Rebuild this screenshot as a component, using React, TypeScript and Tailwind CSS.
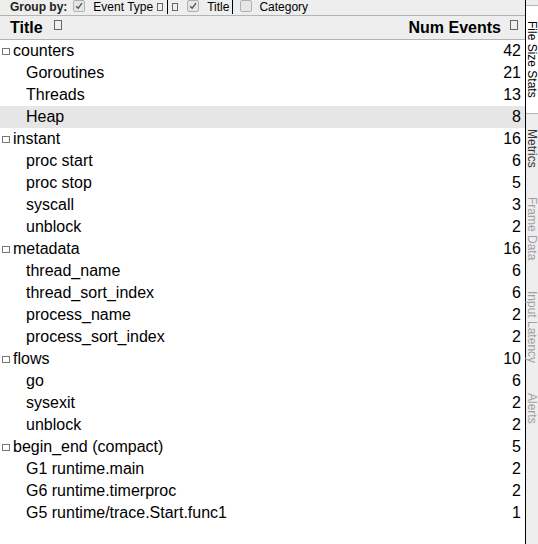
import React from "react";

type Row = { title: string; count: number; level: 0 | 1; selected?: boolean };

const rows: Row[] = [
  { title: "counters", count: 42, level: 0 },
  { title: "Goroutines", count: 21, level: 1 },
  { title: "Threads", count: 13, level: 1 },
  { title: "Heap", count: 8, level: 1, selected: true },
  { title: "instant", count: 16, level: 0 },
  { title: "proc start", count: 6, level: 1 },
  { title: "proc stop", count: 5, level: 1 },
  { title: "syscall", count: 3, level: 1 },
  { title: "unblock", count: 2, level: 1 },
  { title: "metadata", count: 16, level: 0 },
  { title: "thread_name", count: 6, level: 1 },
  { title: "thread_sort_index", count: 6, level: 1 },
  { title: "process_name", count: 2, level: 1 },
  { title: "process_sort_index", count: 2, level: 1 },
  { title: "flows", count: 10, level: 0 },
  { title: "go", count: 6, level: 1 },
  { title: "sysexit", count: 2, level: 1 },
  { title: "unblock", count: 2, level: 1 },
  { title: "begin_end (compact)", count: 5, level: 0 },
  { title: "G1 runtime.main", count: 2, level: 1 },
  { title: "G6 runtime.timerproc", count: 2, level: 1 },
  { title: "G5 runtime/trace.Start.func1", count: 1, level: 1 },
];

// little "missing glyph" box used all over the original
function Tofu({ className = "" }: { className?: string }) {
  return <span className={`inline-block border border-[#666] ${className}`} />;
}

function Check({ checked }: { checked: boolean }) {
  return (
    <span className="inline-flex items-center justify-center w-[12px] h-[12px] rounded-[2px] border border-[#b0b0b0] bg-[#e6e6e6]">
      {checked && (
        <svg viewBox="0 0 12 12" className="w-[10px] h-[10px]">
          <path d="M2.5 6.2 L5 8.6 L9.6 2.6" fill="none" stroke="#555" strokeWidth="1.6" />
        </svg>
      )}
    </span>
  );
}

const tabs = [
  { label: "File Size Stats", active: true, dim: false },
  { label: "Metrics", active: false, dim: false },
  { label: "Frame Data", active: false, dim: true },
  { label: "Input Latency", active: false, dim: true },
  { label: "Alerts", active: false, dim: true },
];

export default function App() {
  return (
    <div className="flex w-[538px] h-[544px] overflow-hidden bg-white font-['Liberation_Sans',Arial,sans-serif] text-black">
      {/* main table */}
      <div className="flex flex-col w-[525px]">
        {/* group by bar */}
        <div className="flex items-center h-[16px] bg-[#eeeeee] border-b border-[#b4b4b4] text-[12px] leading-none pl-[10px] pb-[2px]">
          <span className="font-bold text-[#222]">Group by:</span>
          <span className="ml-[6px]"><Check checked /></span>
          <span className="ml-[8px]">Event Type</span>
          <Tofu className="ml-[4px] w-[6px] h-[8px]" />
          <span className="ml-[4px] h-[15px] border-l border-black" />
          <Tofu className="ml-[4px] w-[6px] h-[8px]" />
          <span className="ml-[9px]"><Check checked /></span>
          <span className="ml-[8px]">Title</span>
          <span className="ml-[3px] h-[15px] border-l border-black" />
          <span className="ml-[7px]"><Check checked={false} /></span>
          <span className="ml-[7px]">Category</span>
        </div>

        {/* header */}
        <div className="flex items-center justify-between h-[24px] bg-[#eeeeee] border-b border-[#b4b4b4] pl-[10px] pr-[7px] text-[16px] font-bold">
          <div className="flex items-center">
            <span>Title</span>
            <Tofu className="ml-[11px] w-[8px] h-[10px] -mt-[6px]" />
          </div>
          <div className="flex items-center">
            <span>Num Events</span>
            <Tofu className="ml-[9px] w-[8px] h-[10px] -mt-[6px]" />
          </div>
        </div>

        {/* rows */}
        <div className="flex flex-col text-[16px]">
          {rows.map((r, i) => (
            <div
              key={i}
              className={`flex items-center justify-between h-[22px] pr-[4px] ${
                r.selected ? "bg-[#e6e6e6]" : ""
              }`}
            >
              <div className="flex items-center">
                {r.level === 0 ? (
                  <>
                    <Tofu className="ml-[2px] w-[8px] h-[7px] border-[#777]" />
                    <span className="ml-[3px]">{r.title}</span>
                  </>
                ) : (
                  <span className="ml-[26px]">{r.title}</span>
                )}
              </div>
              <span>{r.count}</span>
            </div>
          ))}
        </div>
      </div>

      {/* side tabs */}
      <div className="flex flex-col w-[13px] border-l border-black bg-[#eeeeee] pt-[5px] text-[12px] leading-none">
        {tabs.map((t) => (
          <div
            key={t.label}
            className={`flex justify-center py-[15px] ${
              t.active ? "bg-white border-y border-[#b4b4b4] text-black" : t.dim ? "text-[#a0a0a0]" : "text-[#333]"
            }`}
          >
            <span className="[writing-mode:vertical-rl] whitespace-nowrap">{t.label}</span>
          </div>
        ))}
      </div>
    </div>
  );
}
